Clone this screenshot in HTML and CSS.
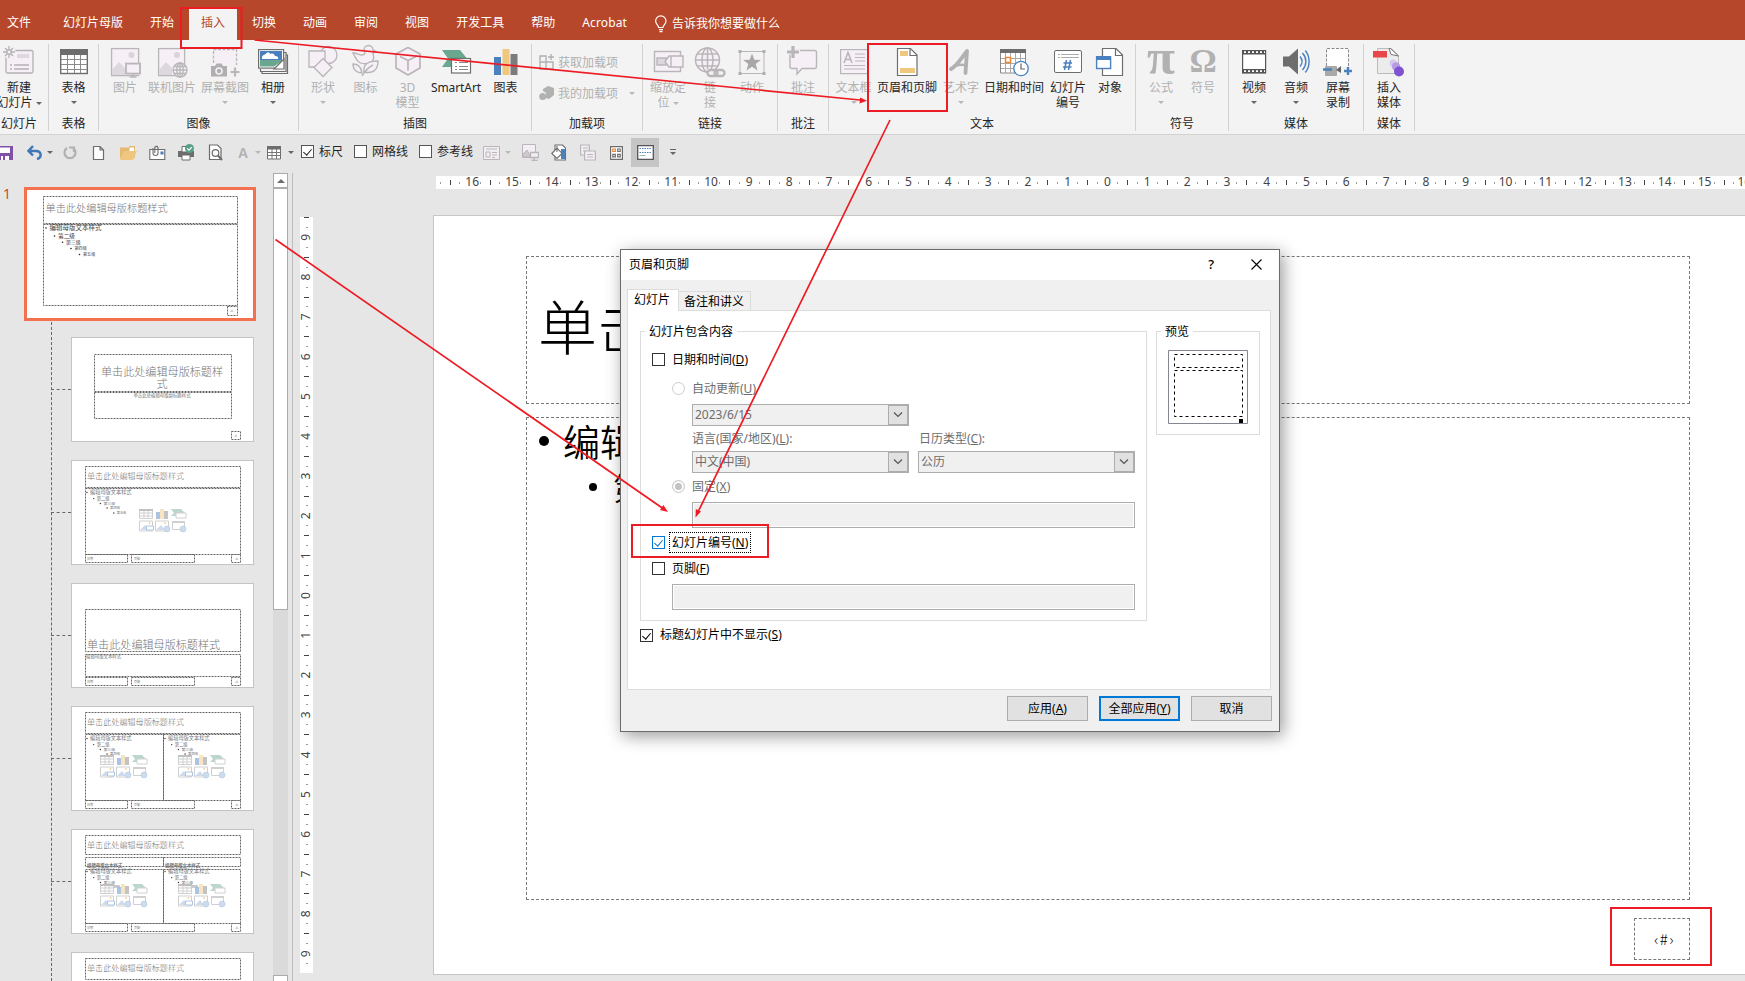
FILE: index.html
```html
<!DOCTYPE html>
<html lang="zh-CN">
<head>
<meta charset="utf-8">
<title>幻灯片母版</title>
<link rel="stylesheet" href="styles.css">
</head>
<body>
<div class="app">
  <nav class="tabs">
    <span class="tab tab-file">文件</span>
    <span class="tab">幻灯片母版</span>
    <span class="tab">开始</span>
    <span class="tab active">插入</span>
    <span class="tab">切换</span>
    <span class="tab">动画</span>
    <span class="tab">审阅</span>
    <span class="tab">视图</span>
    <span class="tab">开发工具</span>
    <span class="tab">帮助</span>
    <span class="tab acro">Acrobat</span>
    <span class="tell"><svg width="14" height="18" viewBox="0 0 14 18" fill="none" stroke="#fff" stroke-width="1.2"><path d="M4.6 12.5c0-2.2-3-3.2-3-6.400a5.200 5.200 0 0 1 10.400 0c0 3.200-3 4.200-3 6.400zM5 14.600h4M5.500 16.700h3"/></svg>告诉我你想要做什么</span>
  </nav>

  <section class="ribbon">
    <div class="group g-slide">
      <div class="items">
        <div class="btn"><svg viewBox="0 0 32 32" fill="none" stroke="#b5b0b5" stroke-width="1.300"><rect x="3" y="5.500" width="27" height="22.500" rx="1.500" fill="#f6f0f6"/><rect x="14" y="9" width="12" height="4" fill="#ddd8dd" stroke="none"/><path d="M7 20h2M11 20h15M7 24h2M11 24h15"/><circle cx="6" cy="7" r="6.500" fill="#f3f3f3" stroke="none"/><path d="M6 1v12M0 7h12M2 3l8 8M10 3l-8 8" stroke-width="1.300"/><circle cx="6" cy="7" r="2.200" fill="#f3f3f3"/></svg><span>新建</span><span>幻灯片 <i class="caret"></i></span></div>
      </div>
      <div class="glabel">幻灯片</div>
    </div>
    <div class="group g-table">
      <div class="items">
        <div class="btn"><svg viewBox="0 0 32 32"><rect x="2.700" y="5" width="26.600" height="23.500" fill="#fff" stroke="#6d6d6d" stroke-width="1.400"/><path d="M2 4h28v6H2z" fill="#6d6d6d"/><path d="M3 14.500h26M3 19.500h26M3 24.500h26M9.500 10v18M16.500 10v18M22.500 10v18" stroke="#8a8a8a" fill="none"/></svg><span>表格</span><i class="caret"></i></div>
      </div>
      <div class="glabel">表格</div>
    </div>
    <div class="group g-image">
      <div class="items">
        <div class="btn off"><svg viewBox="0 0 32 32" fill="none" stroke="#b9b5b9" stroke-width="1.300"><rect x="2.600" y="3.600" width="27" height="27" fill="#f6f0f6"/><circle cx="22.500" cy="10" r="3" fill="#d9d4d9" stroke="none"/><path d="M3 30V25l7-8 6 6v7z" fill="#ddd8dd" stroke="none"/><rect x="16" y="18" width="16" height="12" fill="#f3f3f3" stroke="none"/><rect x="17" y="18.600" width="14" height="10" fill="#f6f0f6" stroke-width="1.800"/><path d="M24 29v3M20.500 32h7"/></svg><span>图片</span></div>
        <div class="btn off"><svg viewBox="0 0 32 32" fill="none" stroke="#b9b5b9" stroke-width="1.300"><rect x="2.600" y="3.600" width="26" height="27" fill="#f6f0f6"/><circle cx="21" cy="10" r="3" fill="#d9d4d9" stroke="none"/><path d="M3 30V25l7-8 6 6v7z" fill="#ddd8dd" stroke="none"/><circle cx="24" cy="25" r="7" fill="#f3f3f3"/><ellipse cx="24" cy="25" rx="3.200" ry="7"/><path d="M17 25h14M24 18v14M18 21.500h12M18 28.500h12"/></svg><span>联机图片</span></div>
        <div class="btn off"><svg viewBox="0 0 32 32" fill="none" stroke="#b9b5b9" stroke-width="1.300"><path d="M4.500 18V4.500h23V20" stroke-dasharray="3 1.500" fill="#f6f0f6"/><path d="M2 21h4l1.500-2.500h5L14 21h4v10.500H2z" fill="#b1adb1" stroke="none"/><circle cx="10" cy="26" r="3" stroke="#f3f3f3" stroke-width="1.600"/><path d="M26 22.500v9M21.500 27h9" stroke-width="2.200"/></svg><span>屏幕截图</span><i class="caret"></i></div>
        <div class="btn"><svg viewBox="0 0 32 32" fill="none" stroke="#6d6d6d" stroke-width="1.200"><path d="M5 26v2.500h25.500V10H28"/><path d="M3.500 24v2.500H29V7.500h-2" fill="#f3f3f3"/><rect x="1.600" y="4.600" width="25" height="18.500" fill="#fff"/><path d="M3 6h22v9H3z" fill="#4a80bd" stroke="none"/><path d="M5 12c1-3 4-2 4.500-4 2-1 3 0 4 1 2-1 4 0 4.500 2 2 0 4 1 3 3H5z" fill="#fff" stroke="none"/><path d="M3 15h22v1l-8 5.500H3z" fill="#69a78f" stroke="none"/><path d="M17 24l10-10v10z" fill="#fff"/></svg><span>相册</span><i class="caret"></i></div>
      </div>
      <div class="glabel">图像</div>
    </div>
    <div class="group g-illus">
      <div class="items">
        <div class="btn off"><svg viewBox="0 0 32 32" fill="#f6f0f6" stroke="#b9b5b9" stroke-width="1.300"><circle cx="21.500" cy="10" r="8.500"/><path d="M2 6h16v16H2z"/><path d="M16 13.500l9 9-9 9-9-9z"/></svg><span>形状</span><i class="caret"></i></div>
        <div class="btn off"><svg viewBox="0 0 32 32" fill="#f6f0f6" stroke="#b9b5b9" stroke-width="1.400"><path d="M14 5a4.500 4.500 0 0 1 9 0l3 1.500-3 1.500c0 3 2 4 0 7-3 5-13 5-16 0-2-3-3-5-4-7 4 0 6 2 9 2 3 0 4-3 2-5z"/><path d="M28 16c-10 0-15 3-14 11 9 2 14-2 14-11zM3 19c5 0 8 2 9 9-5 0-9-3-9-9z"/><path d="M12 31c3-5 7-9 11-11" fill="none"/></svg><span>图标</span></div>
        <div class="btn off"><svg viewBox="0 0 32 32" fill="#f6f0f6" stroke="#b9b5b9" stroke-width="1.700" stroke-linejoin="round"><path d="M16 2.500l12 6.500v14L16 30 4 23V9z"/><path d="M8 11.500l8 4 8-4M16 15.500v10" fill="none"/></svg><span>3D</span><span>模型</span></div>
        <div class="btn"><svg viewBox="0 0 32 32"><path d="M2 5h18l7 8.500-7 8.500H2l6-8.500z" fill="#69a78f"/><rect x="11.500" y="13.500" width="19" height="14.500" fill="#fff" stroke="#6d6d6d" stroke-width="1.200"/><path d="M15 17.500h2M19 17.500h9M15 21.500h2M19 21.500h9M15 24.500h2M19 24.500h9" stroke="#8a8a8a"/></svg><span class="latin">SmartArt</span></div>
        <div class="btn"><svg viewBox="0 0 32 32"><path d="M4 12h7v18H4z" fill="#4a80bd"/><path d="M12.500 4h7v26h-7z" fill="#efc77e"/><path d="M20.500 9h7v21h-7z" fill="#7c7c7c"/></svg><span>图表</span></div>
      </div>
      <div class="glabel">插图</div>
    </div>
    <div class="group g-addin">
      <div class="items col">
        <div class="line off"><svg width="17" height="17" viewBox="0 0 17 17" fill="none" stroke="#b1b1b1" stroke-width="1.400"><path d="M1 2h6v6H1zM1 8h6v7H1zM7 8h7v7H7zM12 0v6M9 3h6"/></svg>获取加载项</div>
        <div class="line off"><svg width="17" height="17" viewBox="0 0 17 17" fill="#b1b1b1"><path d="M9 1l6 2v7l-5 4-3-1V8L4 6V4z"/><circle cx="3.700" cy="11.500" r="3.500"/></svg>我的加载项<i class="caret far"></i></div>
      </div>
      <div class="glabel">加载项</div>
    </div>
    <div class="group g-link">
      <div class="items">
        <div class="btn off"><svg viewBox="0 0 32 32" fill="#f6f0f6" stroke="#b9b5b9" stroke-width="1.400"><rect x="2.500" y="6.500" width="26" height="20"/><path d="M5 13h9v7H5z" fill="#ddd8dd"/><path d="M13 16.500l4-5.500h14v11H17z"/><path d="M19 11v11"/></svg><span>缩放定</span><span>位 <i class="caret"></i></span></div>
        <div class="btn off"><svg viewBox="0 0 32 32" fill="none" stroke="#b9b5b9" stroke-width="1.500"><circle cx="13.500" cy="15" r="12" fill="#f6f0f6"/><ellipse cx="13.500" cy="15" rx="5.500" ry="12"/><path d="M1.500 15h24M13.500 3v24M3 9h21M3 21h21"/><path d="M13 24h19v8H13z" fill="#f3f3f3" stroke="none"/><rect x="13.500" y="25" width="10" height="6" rx="3" stroke-width="2.300"/><rect x="20.500" y="25" width="10" height="6" rx="3" stroke-width="2.300"/></svg><span>链</span><span>接</span></div>
        <div class="btn off"><svg viewBox="0 0 32 32" fill="none" stroke="#b9b5b9"><path d="M4 6.500h24v22H4z"/><path d="M2.500 5h3v3h-3zM26.500 5h3v3h-3zM2.500 27h3v3h-3zM26.500 27h3v3h-3z" fill="#b1adb1" stroke="none"/><path d="M16 8.500l2.300 6.200 6.500.3-5.100 4.100 1.800 6.400-5.500-3.700-5.500 3.700 1.800-6.400-5.100-4.100 6.500-.3z" fill="#aaa6aa" stroke="none"/></svg><span>动作</span></div>
      </div>
      <div class="glabel">链接</div>
    </div>
    <div class="group g-note">
      <div class="items">
        <div class="btn off"><svg viewBox="0 0 32 32" fill="#f6f0f6" stroke="#b9b5b9" stroke-width="1.400"><path d="M6 5.500h21.500a2 2 0 0 1 2 2v14a2 2 0 0 1-2 2H15l-5 5.500v-5.500H5a2 2 0 0 1-2-2V8z"/><path d="M6.500 0v14M0 7h13" stroke="#f3f3f3" stroke-width="5"/><path d="M6 1v12M0 7h12" stroke-width="3.200"/></svg><span>批注</span></div>
      </div>
      <div class="glabel">批注</div>
    </div>
    <div class="group g-text">
      <div class="items">
        <div class="btn off"><svg viewBox="0 0 32 32" fill="#f6f0f6" stroke="#b9b5b9" stroke-width="1.200"><rect x="2.600" y="4.600" width="27" height="24"/><path d="M17 9h10M17 12.500h10M17 16h10M6 20.500h21M6 24h21"/><path d="M6 18l4-10.500L14 18M7.500 14.500h5" fill="none" stroke-width="1.600"/></svg><span>文本框</span><i class="caret"></i></div>
        <div class="btn"><svg viewBox="0 0 32 32"><path d="M6.500 3.500h13l6.500 6.500v20.500H6.500z" fill="#fff" stroke="#6d6d6d" stroke-width="1.200"/><path d="M19 3.500v7h7" fill="none" stroke="#6d6d6d" stroke-width="1.200"/><path d="M9 6h8v5H9zM9 23h15v5H9z" fill="#efc77e"/></svg><span>页眉和页脚</span></div>
        <div class="btn off"><svg viewBox="0 0 32 32" fill="none" stroke="#b1b1b1" stroke-linejoin="round" stroke-linecap="round"><path d="M6 24C13 20 17 12 22 6l-1.500 22" stroke-width="3.800"/><path d="M11 20.500c4-1 7-1 10 0" stroke-width="2.600"/></svg><span>艺术字</span><i class="caret"></i></div>
        <div class="btn"><svg viewBox="0 0 32 32" fill="none" stroke="#8a8a8a"><path d="M2.500 5h25v23h-25z" fill="#fff"/><path d="M2 4h26v4H2z" fill="#6d6d6d" stroke="none"/><path d="M3 13.500h24M3 18.500h24M3 23.500h24M7.500 8v20M12.500 8v20M17.500 8v20M22.500 8v20" stroke="#aaa"/><rect x="7.500" y="12.500" width="5" height="5" stroke="#e8862e" stroke-width="1.500" fill="#fff"/><circle cx="23" cy="23.500" r="7.200" fill="#fff" stroke="#4a80bd" stroke-width="1.300"/><path d="M23 18.500v5.500h4" stroke="#666" stroke-width="1.200"/></svg><span>日期和时间</span></div>
        <div class="btn"><svg viewBox="0 0 32 32"><rect x="2.500" y="5.500" width="27" height="22" rx="1.500" fill="#fff" stroke="#6d6d6d"/><path d="M6 9.500h2M9 9.500h18M6 12.500h2M9 12.500h18" stroke="#aaa"/><path d="M14.500 15l-2 10M18.500 15l-2 10M11.500 18h8.500M11 22h8.500" stroke="#4a80bd" stroke-width="1.500"/></svg><span>幻灯片</span><span>编号</span></div>
        <div class="btn"><svg viewBox="0 0 32 32"><path d="M8.500 3.500h13.500l6.500 6.500v20.500h-20z" fill="#fff" stroke="#6d6d6d" stroke-width="1.200"/><path d="M21.500 3.500v7h7" fill="none" stroke="#6d6d6d" stroke-width="1.200"/><rect x="2.600" y="12" width="14" height="11.500" fill="#fff" stroke="#4a80bd" stroke-width="1.400"/><path d="M2 11h15v4H2z" fill="#4a80bd"/></svg><span>对象</span></div>
      </div>
      <div class="glabel">文本</div>
    </div>
    <div class="group g-symbol">
      <div class="items">
        <div class="btn off"><b class="glyph">π</b><span>公式</span><i class="caret"></i></div>
        <div class="btn off"><b class="glyph omega">Ω</b><span>符号</span></div>
      </div>
      <div class="glabel">符号</div>
    </div>
    <div class="group g-media">
      <div class="items">
        <div class="btn"><svg viewBox="0 0 32 32"><rect x="4.600" y="5.600" width="23" height="22" fill="#fff" stroke="#555" stroke-width="1.200"/><path d="M4 5h24v4.500H4zM4 24h24v4.500H4z" fill="#555"/><path d="M6 7.200h21M6 26.200h21" stroke="#fff" stroke-width="1.800" stroke-dasharray="2 2"/></svg><span>视频</span><i class="caret"></i></div>
        <div class="btn"><svg viewBox="0 0 32 32"><path d="M3 11.500h6l9-8v26l-9-8H3z" fill="#6d6d6d"/><path d="M20 11.500c2.500 3 2.500 7 0 10M22.500 8c4.500 5 4.500 12 0 17M25.300 5.500c5 6 5 16 0 22" fill="none" stroke="#4a80bd" stroke-width="1.400"/></svg><span>音频</span><i class="caret"></i></div>
        <div class="btn"><svg viewBox="0 0 32 32"><path d="M4.500 21V3.500h22V22" fill="#fff" stroke="#8a8a8a" stroke-dasharray="3 1.500"/><rect x="3" y="21" width="12" height="10" rx="1" fill="#a8a8a8"/><path d="M14 25l5-4v7z" fill="#666"/><path d="M1 24.500h9M22 26h8M26 22v8" stroke="#4a80bd" stroke-width="2.400"/></svg><span>屏幕</span><span>录制</span></div>
      </div>
      <div class="glabel">媒体</div>
    </div>
    <div class="group g-flash">
      <div class="items">
        <div class="btn"><svg viewBox="0 0 32 32"><path d="M4.500 3.500h14l7 7v18h-21z" fill="#ececec" stroke="#bbb"/><path d="M16 3.500l2 6 7.500 1.500-8-7.500z" fill="#fff" stroke="#777"/><path d="M0 6h14v6.500H0z" fill="#e8474a"/><circle cx="20" cy="18" r="3.500" fill="#d6c8ee"/><circle cx="23" cy="21.500" r="4.200" fill="#b79be4"/><circle cx="26" cy="26.500" r="5" fill="#8052cf"/></svg><span>插入</span><span>媒体</span></div>
      </div>
      <div class="glabel">媒体</div>
    </div>
  </section>

  <section class="quick">
    <svg class="q-save" width="13" height="16" viewBox="0 0 13 16"><path d="M-3 1h16v14H-3z" fill="#8151a8"/><path d="M0 2.500h10V8H0zM1 11h8v4H1z" fill="#fff"/><path d="M3 11h2v4H3z" fill="#8151a8"/></svg>
    <svg class="ml14" width="15" height="16" viewBox="0 0 15 16" fill="none" stroke="#3d77b5" stroke-width="2.400"><path d="M2 6h7c6 0 6 7 1 8M6 1L1.500 6 6 10.500"/></svg>
    <i class="caret ml5"></i>
    <svg class="ml10" width="14" height="16" viewBox="0 0 14 16" fill="none" stroke="#b1b1b1" stroke-width="2.200"><path d="M4 3a5.500 5.500 0 1 0 6 0M6 2.500h5V7"/></svg>
    <svg class="ml15" width="13" height="16" viewBox="0 0 13 16" fill="#fff" stroke="#6d6d6d" stroke-width="1.200"><path d="M1.500 1.500h6.500l3.500 3.500v9.500h-10zM8 1.500V5h3.500"/></svg>
    <svg class="ml15" width="17" height="16" viewBox="0 0 17 16"><path d="M0 2.500h9V1h6v12H0z" fill="#e5b971"/><path d="M9.500 2.500h4.500V7H9.500z" fill="#fff"/><path d="M3.500 6H17l-4 9H0z" fill="#efc77e"/></svg>
    <svg class="ml12" width="17" height="16" viewBox="0 0 17 16" fill="#fff" stroke="#6d6d6d" stroke-width="1.100"><path d="M.8 4.500h15v10H.8z"/><path d="M12 7h2v2h-2z" fill="#4a80bd" stroke="#4a80bd"/><path d="M4 3v5a2.500 2.500 0 0 0 5 0V2.500a1.700 1.700 0 0 0-3.200 0V8" fill="none"/></svg>
    <svg class="ml12" width="17" height="17" viewBox="0 0 17 17"><path d="M0 7h16v6H0z" fill="#6d6d6d"/><path d="M4 2.500h8V8H4zM4 11h8v5H4z" fill="#fff" stroke="#6d6d6d"/><circle cx="11.500" cy="4.500" r="4.500" fill="#58a088"/><path d="M9.300 4.500l1.700 1.700 2.800-3" fill="none" stroke="#fff" stroke-width="1.200"/></svg>
    <svg class="ml13" width="15" height="17" viewBox="0 0 15 17" fill="#fff" stroke="#6d6d6d" stroke-width="1.200"><path d="M1.500 1h8l3.500 3.500V15.500H1.500z"/><circle cx="7.500" cy="9" r="3.300"/><path d="M10 11.500l4 4.500" stroke-width="2"/></svg>
    <span class="q-a">A</span>
    <i class="caret pale ml7"></i>
    <svg class="ml6" width="14" height="14" viewBox="0 0 14 14"><path d="M.5 1h13v12H.5z" fill="#fff" stroke="#6d6d6d"/><path d="M0 0h14v3.500H0z" fill="#6d6d6d"/><path d="M1 6.500h12M1 9.500h12M5 3v10M9.500 3v10" stroke="#777"/></svg>
    <i class="caret ml7"></i>
    <span class="box on ml7"></span><span class="q-label">标尺</span>
    <span class="box ml11"></span><span class="q-label">网格线</span>
    <span class="box ml11"></span><span class="q-label">参考线</span>
    <svg class="ml10" width="17" height="16" viewBox="0 0 17 16" fill="#f3eef3" stroke="#b9b5b9"><path d="M.5 1.500h16v13H.5zM3 4h11M3 7h4v5H3zM9 7.500h5M9 10h5M9 12.500h3"/></svg>
    <i class="caret pale ml5"></i>
    <svg class="ml11" width="17" height="17" viewBox="0 0 17 17" fill="#f3eef3" stroke="#b9b5b9"><path d="M.5.5h13v13H.5z"/><path d="M1 13V10l4-4 4 7z" fill="#cfcacf"/><path d="M8.500 8.500h8v5h-8zM12 14v2.500M9.500 16.500h6" stroke-width="1.300"/></svg>
    <svg class="ml12" width="16" height="17" viewBox="0 0 16 17" fill="#fff" stroke="#6d6d6d" stroke-width="1.100"><path d="M4 1h7.500l3 3v12H4z"/><path d="M10 5h4.500v10H10z" fill="#4a80bd" stroke="none"/><path d="M.8 9.500L6 4l5 5.500L6 14.500zM6 8V2"/></svg>
    <svg class="ml13" width="16" height="17" viewBox="0 0 16 17" fill="#f3eef3" stroke="#b9b5b9" stroke-width="1.200"><path d="M.6 1h8.800v10H.6zM3 4h5M3 7h5"/><path d="M4.600 7h10.800v9H4.600zM7 10.500h6M7 13h6"/></svg>
    <svg class="ml14" width="13" height="14" viewBox="0 0 13 14" fill="#fff" stroke="#6d6d6d" stroke-width="1.200"><path d="M.6.600h11.800v12.800H.6z"/><path d="M2.800 3h2.500v2.500H2.800z" stroke="#e8862e"/><path d="M7.700 3h2.500v2.500H7.700zM2.800 8.300h2.500v2.500H2.800zM7.700 8.300h2.500v2.500H7.700z"/></svg>
    <span class="pressed"><svg width="17" height="15" viewBox="0 0 17 15"><path d="M.7.7h15.600v13.600H.7z" fill="#fff" stroke="#555" stroke-width="1.300"/><path d="M2.500 3.500h12M2.500 7.500h12" stroke="#4a80bd" stroke-dasharray="1.500 1"/><path d="M2.500 10.500h6" stroke="#8fc0b0"/></svg></span>
    <svg class="ml11" width="6" height="7" viewBox="0 0 6 7"><path d="M0 .5h6" stroke="#666"/><path d="M0 3h6L3 6z" fill="#666"/></svg>
  </section>

  <main class="work">
    <aside class="nav">
      <div class="thumbs" id="thumbs"></div>
      <div class="scroll">
        <div class="arrow"><i></i></div>
        <div class="grip"></div>
        <div class="trough"></div>
        <div class="arrow down"></div>
      </div>
    </aside>
    <svg class="vruler" id="vruler" width="13" height="756"></svg>
    <div class="editor">
      <svg class="hruler" id="hruler" width="1309" height="13"></svg>
      <div class="slide">
        <div class="ph ph-title">单击此处编辑母版标题样式</div>
        <div class="ph ph-body">
          <p class="l1"><i></i>编辑母版文本样式</p>
          <p class="l2"><i></i>第二级</p>
        </div>
        <div class="ph ph-num">‹#›</div>
      </div>
    </div>
  </main>

  <div class="dialog">
    <div class="d-title"><span>页眉和页脚</span><b>?</b><svg width="11" height="11" viewBox="0 0 11 11" stroke="#000" stroke-width="1.100"><path d="M.5.500l10 10M10.500.500l-10 10"/></svg></div>
    <div class="d-tabs"><span class="d-tab sel">幻灯片</span><span class="d-tab">备注和讲义</span></div>
    <div class="d-panel">
      <div class="d-cols">
        <div class="fs fs-main">
          <span class="legend">幻灯片包含内容</span>
          <div class="row r-date"><span class="box dk"></span>日期和时间(<u>D</u>)</div>
          <div class="row r-auto dim"><span class="radio"></span>自动更新(<u>U</u>)</div>
          <div class="combos"><div class="combo">2023/6/15<span><svg width="10" height="6" viewBox="0 0 10 6"><path d="M1 .5l4 4 4-4"/></svg></span></div></div>
          <div class="row r-lang dim"><span>语言(国家/地区)(<u>L</u>):</span><span>日历类型(<u>C</u>):</span></div>
          <div class="combos"><div class="combo">中文(中国)<span><svg width="10" height="6" viewBox="0 0 10 6"><path d="M1 .5l4 4 4-4"/></svg></span></div><div class="combo">公历<span><svg width="10" height="6" viewBox="0 0 10 6"><path d="M1 .5l4 4 4-4"/></svg></span></div></div>
          <div class="row r-fix dim"><span class="radio dot"></span>固定(<u>X</u>)</div>
          <div class="field f1"></div>
          <div class="row r-num"><span class="box blue on"></span><span class="focus">幻灯片编号(<u>N</u>)</span></div>
          <div class="row r-foot"><span class="box dk"></span>页脚(<u>F</u>)</div>
          <div class="field f2"></div>
        </div>
        <div class="fs fs-prev">
          <span class="legend">预览</span>
          <svg width="80" height="74" viewBox="0 0 80 74" fill="none"><path d="M.5.500h79v73H.5z" fill="#fff" stroke="#828790"/><path d="M6.500 4.500h68v13h-68zM6.500 20.500h68v46h-68z" stroke="#000" stroke-dasharray="3 3"/><path d="M71 69h4v4h-4z" fill="#000"/></svg>
        </div>
      </div>
      <div class="row r-hide"><span class="box dk on"></span>标题幻灯片中不显示(<u>S</u>)</div>
    </div>
    <div class="d-foot"><span class="push">应用(<u>A</u>)</span><span class="push main">全部应用(<u>Y</u>)</span><span class="push">取消</span></div>
  </div>

  <svg class="marks" width="1745" height="981" viewBox="0 0 1745 981" fill="none" stroke="#ed1c24" stroke-width="2">
    <path d="M181 8h60.500v40H181zM868 44h79v67h-79zM632 525h136v32H632zM1611 908h100v57h-100z"/>
    <path d="M254.500 40L860 100M890 120L698.500 511M275.500 239.500L663 508.500" stroke-width="1.700"/>
    <path d="M867 100.700l-7.500 2.700.6-6zM695.500 517.500l.300-8.500 5.200 2.600zM668 512l-8-2 3.400-5z" fill="#ed1c24" stroke="none"/>
  </svg>
</div>
<script src="app.js"></script>
</body>
</html>
```
FILE: styles.css
```css
* { box-sizing: border-box; }
body {
  margin: 0;
  font: 12px/14px "Noto Sans", "Noto Sans CJK SC", sans-serif;
  color: #262626;
  background: #e6e6e6;
}
.app {
  position: relative;
  display: flex;
  flex-direction: column;
  width: 1745px;
  height: 981px;
  overflow: hidden;
  white-space: nowrap;
}

/* tab strip */
.tabs {
  display: flex;
  gap: 3px;
  height: 40px;
  padding-top: 9px;
  background: #b7472a;
  color: #fff;
}
.tab { padding: 7px 12px 0; }
.tab-file { padding: 7px 17px 0 7px; }
.tab.active { background: #f3f3f3; color: #b7472a; }
.tab.acro { letter-spacing: .15px; }
.tell { display: flex; align-items: center; gap: 4px; padding: 0 0 0 12px; margin-top: -2px; }

/* ribbon */
.ribbon {
  display: flex;
  height: 95px;
  padding-top: 4px;
  background: #f3f3f3;
  border-bottom: 1px solid #d2d2d2;
}
.group {
  display: flex;
  flex-direction: column;
  justify-content: space-between;
  height: 87px;
  border-right: 1px solid #d2d2d2;
}
.items { display: grid; }
.glabel { text-align: center; height: 14px; }
.g-slide { width: 49px; }
.g-slide .items { grid-template-columns: 38px; }
.g-slide .glabel { padding-right: 10px; }
.g-table { width: 50px; }
.g-image { width: 200px; }
.g-image .items { grid-template-columns: 36px 58px 48px 48px; padding-left: 8px; }
.g-illus { width: 233px; }
.g-illus .items { grid-template-columns: 42px 43px 41px 56px 43px; padding-left: 3px; }
.g-addin { width: 111px; }
.g-link { width: 135px; }
.g-link .items { grid-template-columns: 42px 42px 42px; padding-left: 4px; }
.g-note { width: 51px; }
.g-text { width: 307px; }
.g-text .items { grid-template-columns: 35px 72px 36px 70px 38px 46px; padding-left: 7px; }
.g-symbol { width: 93px; }
.g-symbol .items { grid-template-columns: 42px 42px; padding-left: 4px; }
.g-media { width: 135px; }
.g-media .items { grid-template-columns: 42px 42px 42px; padding-left: 4px; }
.g-flash { width: 51px; }
.btn { display: flex; flex-direction: column; align-items: center; padding-top: 1px; line-height: 15px; }
.btn svg { width: 32px; height: 32px; margin-bottom: 3px; overflow: visible; flex: none; }
.btn > .caret { margin-top: 6px; }
.off { color: #b1b1b1; }
.latin { letter-spacing: -0.1px; }
.caret {
  display: inline-block;
  vertical-align: middle;
  border: 3px solid transparent;
  border-top-color: #666;
  border-bottom: 0;
  flex: none;
}
.off .caret, .caret.pale { border-top-color: #b9b9b9; }
.caret.far { margin-left: 9px; }
.items.col { padding: 9px 0 0 7px; row-gap: 12px; }
.line { display: flex; align-items: center; gap: 2px; height: 19px; }
.glyph { font: bold 51px/20px "Liberation Serif", serif; height: 35px; padding-top: 2px; }
.glyph.omega { font-size: 34px; line-height: 28px; }

/* quick access bar */
.quick { display: flex; align-items: center; height: 35px; }
.quick svg { flex: none; }
.ml5 { margin-left: 5px; }
.ml6 { margin-left: 6px; }
.ml7 { margin-left: 7px; }
.ml10 { margin-left: 10px; }
.ml11 { margin-left: 11px; }
.ml12 { margin-left: 12px; }
.ml13 { margin-left: 13px; }
.ml14 { margin-left: 14px; }
.ml15 { margin-left: 15px; }
.q-a { margin-left: 15px; width: 10px; font: bold 14px "Liberation Sans", sans-serif; color: #b1b1b1; }
.q-label { margin-left: 5px; padding-bottom: 2px; }
.box { position: relative; flex: none; width: 13px; height: 13px; border: 1px solid #555; background: #fff; }
.box.dk { border-color: #333; }
.box.blue { border-color: #0078d7; color: #0078d7; }
.box.on::after {
  content: "";
  position: absolute;
  left: 3px;
  top: 1px;
  width: 4px;
  height: 7px;
  border: solid currentColor;
  border-width: 0 1.3px 1.3px 0;
  transform: rotate(40deg);
}
.quick .box { margin-bottom: 2px; }
.pressed { display: grid; place-items: center; width: 28px; height: 29px; margin-left: 8px; background: #c5c5c5; }

/* work area */
.work { display: flex; flex: 1; min-height: 0; }
.nav { display: flex; width: 293px; height: 808px; margin-top: 3px; border-right: 1px solid #bdbdbd; }
.thumbs { display: flex; flex-direction: column; gap: 18px; width: 273px; padding-top: 14px; overflow: hidden; position: relative; }
.thumbs svg { flex: none; display: block; }
.thumbs text { fill: #777; font-family: "Noto Sans CJK SC", sans-serif; }
.thumbs .thin { font-weight: 300; }
.master { display: flex; gap: 14px; height: 134px; margin: 0 0 -2px 3px; }
.master b { width: 7px; font: 14px/14px "Noto Sans", sans-serif; color: #d24726; }
.lay { display: flex; align-items: center; height: 105px; flex: none; padding-left: 51px; }
.lay::before { content: ""; width: 20px; border-top: 1px dashed #666; }
.thumbs::before { content: ""; position: absolute; left: 51px; top: 149px; bottom: 0; border-left: 1px dashed #666; }
.scroll { display: flex; flex-direction: column; width: 15px; background: #dadada; }
.arrow { display: grid; place-items: center; height: 15px; background: #fff; border: 1px solid #ababab; }
.arrow i { border: 4px solid transparent; border-bottom-color: #6d6d6d; border-top: 0; }
.grip { height: 422px; background: #fff; border: 1px solid #ababab; }
.trough { flex: 1; }
.arrow.down { height: 6px; border-bottom: 0; }
.vruler { flex: none; margin: 47px 0 0 7px; background: #fff; }
.editor { flex: 1; min-width: 0; padding-left: 120px; overflow: hidden; }
.hruler { display: block; margin: 6px 0 26px 3px; background: #fff; }
.vruler text, .hruler text { font: 12px "Noto Sans", sans-serif; fill: #444; text-anchor: middle; }

/* slide canvas */
.slide { position: relative; width: 1330px; height: 760px; background: #fff; border: 1px solid #c6c6c6; color: #000; }
.ph { position: absolute; border: 1px dashed #777; }
.ph-title { left: 92px; top: 40px; width: 1164px; height: 148px; padding-left: 11px; font: 300 59px/136px "Noto Sans CJK SC", sans-serif; }
.ph-body { left: 92px; top: 201px; width: 1164px; height: 483px; padding-top: 1px; }
.ph-body p { display: flex; align-items: center; margin: 0; font-family: "Noto Sans CJK SC", sans-serif; font-weight: 350; }
.ph-body i { border-radius: 50%; background: #000; }
.l1 { height: 44px; padding-left: 12px; gap: 14px; font-size: 37px; }
.l1 i { width: 10px; height: 10px; }
.l2 { height: 48px; padding-left: 62px; gap: 16px; font-size: 31px; }
.l2 i { width: 8px; height: 8px; }
.ph-num { left: 1200px; top: 702px; width: 56px; height: 42px; padding-left: 5px; text-align: center; letter-spacing: 1.5px; font: 300 15px/39px "Noto Sans CJK SC", sans-serif; }

/* dialog */
.dialog {
  position: absolute;
  left: 620px;
  top: 249px;
  width: 660px;
  height: 483px;
  border: 1px solid #6b6b6b;
  background: #f0f0f0;
  box-shadow: 3px 4px 16px rgba(0, 0, 0, .4);
  color: #000;
}
.d-title { display: flex; align-items: center; height: 30px; padding: 0 17px 0 8px; background: #fff; }
.d-title span { flex: 1; }
.d-title b { font: 500 13px "Noto Sans", sans-serif; margin: 0 37px 3px 0; }
.d-title svg { margin-bottom: 2px; }
.d-tabs { display: flex; align-items: flex-end; height: 30px; padding-left: 6px; }
.d-tab { height: 19px; padding: 3px 6px 0 5px; border: 1px solid #dcdcdc; border-left: 0; border-bottom: 0; }
.d-tab.sel { position: relative; height: 22px; width: 52px; margin-bottom: -1px; padding: 3px 6px; border-left: 1px solid #dcdcdc; background: #fff; }
.d-panel { height: 380px; margin: 0 8px 0 6px; padding: 20px 10px 0 12px; background: #fff; border: 1px solid #dcdcdc; }
.d-cols { display: flex; gap: 9px; align-items: flex-start; }
.fs { position: relative; border: 1px solid #dcdcdc; }
.fs-main { width: 507px; height: 290px; padding-top: 16px; }
.fs-prev { width: 104px; height: 104px; padding: 18px 0 0 11px; }
.legend { position: absolute; left: 4px; top: -7px; padding: 0 4px; background: #fff; }
.row { display: flex; align-items: center; }
.row .box { margin-right: 7px; }
.dim, .combo { color: #6d6d6d; }
.r-date { height: 23px; margin-bottom: 1px; padding-left: 11px; }
.r-auto { height: 32px; padding-left: 31px; padding-top: 1px; }
.r-lang { display: grid; grid-template-columns: 227px 1fr; height: 25px; padding-left: 51px; }
.r-fix { height: 29px; padding: 0 0 2px 31px; }
.r-num { height: 29px; padding-left: 11px; }
.r-num .box { margin-right: 4px; }
.r-foot { height: 23px; margin-bottom: 4px; padding-left: 11px; }
.r-hide { height: 28px; }
.radio { width: 13px; height: 13px; margin-right: 7px; border: 1px solid #ccc; border-radius: 50%; background: #fff; }
.radio.dot { background: #c4c4c4; box-shadow: inset 0 0 0 2px #fff; }
.combos { display: flex; gap: 9px; padding-left: 51px; }
.combo { display: flex; justify-content: space-between; align-items: center; width: 217px; height: 22px; padding-left: 2px; border: 1px solid #adadad; background: #f0f0f0; }
.combo span { display: grid; place-items: center; width: 20px; height: 20px; border: 1px solid #adadad; background: #e1e1e1; }
.combo path { fill: none; stroke: #555; stroke-width: 1.2; }
.field { height: 26px; border: 1px solid #adadad; background: #f0f0f0; box-shadow: inset 0 0 0 1px #fff; }
.f1 { width: 443px; margin-left: 51px; }
.f2 { width: 463px; margin-left: 31px; }
.focus { padding: 3px 2px 2px; border: 1px dotted #000; }
.d-foot { display: flex; justify-content: flex-end; gap: 11px; padding: 6px 7px 0 0; }
.push { width: 81px; height: 25px; border: 1px solid #adadad; background: #e1e1e1; text-align: center; line-height: 23px; }
.push.main { border: 2px solid #0078d7; line-height: 21px; }

.marks { position: absolute; left: 0; top: 0; pointer-events: none; }
```
FILE: app.js
```js
const STEP = 39.8;

// Rulers: numbers each centimetre, a tick at the half and dots at the quarters.
function ruler(zero, length, vertical, max) {
  let out = '';
  const at = (v, a, b, c) => v < 0 || v > length ? '' : vertical
    ? `<path d="M${a} ${Math.floor(v) + .5}H${b}" stroke="${c}"/>`
    : `<path d="M${Math.floor(v) + .5} ${a}V${b}" stroke="${c}"/>`;
  for (let n = -max; n <= max; n++) {
    const p = zero + n * STEP;
    const wide = Math.abs(n) > 9 ? 1 : 0;
    out += vertical
      ? `<text transform="translate(10 ${p}) rotate(-90)">${Math.abs(n)}</text>`
      : `<text x="${p + (n < 0 ? wide * 1.5 : 0)}" y="10">${Math.abs(n)}</text>`;
    out += at(p + STEP / 4, 6, 8, '#999') + at(p - STEP / 4 - wide, 6, 8, '#999') + at(p + STEP / 2, 4, 9, '#444');
    if (n === -max) out += at(p - STEP / 2, 4, 9, '#444') + at(p - STEP * .75, 6, 8, '#999');
  }
  return out;
}
document.getElementById('hruler').innerHTML = ruler(671.5, 1309, false, 16);
document.getElementById('vruler').innerHTML = ruler(378.5, 756, true, 9);

const box = (x, y, w, h) => `<rect x="${x + .5}" y="${y + .5}" width="${w}" height="${h}" fill="none" stroke="#666" stroke-dasharray="2 1"/>`;
const txt = (x, y, size, s, extra = '') => `<text x="${x}" y="${y + size * .36}" font-size="${size}" ${extra}>${s}</text>`;
const foot = box(14, 94, 42, 8) + box(60, 94, 63, 8) + box(160, 94, 9, 8) + txt(16, 98.5, 3, '日期') + txt(63, 98.5, 3, '页脚') + txt(164, 98.5, 3, '‹#›');
const title = txt(16, 16.5, 8.1, '单击此处编辑母版标题样式', 'class="thin"');

function bullets(x, y, levels) {
  const sizes = [5.2, 4.3, 3.9, 3.3, 3.1];
  const names = ['编辑母版文本样式', '第二级', '第三级', '第四级', '第五级'];
  const dy = [0, 6.1, 11, 15.500, 20.500];
  return names.slice(0, levels).map((s, i) =>
    `<circle cx="${x + i * 6.7 + 2}" cy="${y + dy[i]}" r=".7" fill="#333"/>` + txt(x + 5 + i * 6.7, y + dy[i], sizes[i], s)).join('');
}

function pictures(x, y) {
  return `<g transform="translate(${x} ${y})" fill="#fff" stroke="#ccc" opacity=".9">
    <path d="M.5.500h13v9H.5zM1 4h12M1 7h12M5 1v8M9 1v8"/><path d="M0 0h14v2H0z" fill="#bbb" stroke="none"/>
    <path d="M17 3h4v7h-4z" fill="#a3bfde" stroke="none"/><path d="M21 0h4v10h-4z" fill="#f7e2bd" stroke="none"/><path d="M25 2h4v8h-4z" fill="#bdbdbd" stroke="none"/>
    <path d="M32 0h10l4 4-4 3H32l3-3z" fill="#b4d3c7" stroke="none"/><path d="M37 4h10v5H37z"/>
    <path d="M.5 12h13v10H.5zM16.500 12h13v10h-13zM33.500 12.500h12v8h-12z"/><path d="M33 12h13v2H33z" fill="#ccc" stroke="none"/>
    <path d="M1 21l5-5 4 5zM17 21l5-5 4 5z" fill="#c8d8ea" stroke="none"/><path d="M7.500 17h7v4h-7z" stroke="#a3bfde"/>
    <circle cx="10.500" cy="14" r="1" fill="#f3d294" stroke="none"/><circle cx="26" cy="14" r="1" fill="#f3d294" stroke="none"/>
    <circle cx="28" cy="20" r="3" fill="#c8d8ea" stroke="#a3bfde" stroke-width=".5"/><circle cx="44" cy="20" r="3" fill="#c8d8ea" stroke="#a3bfde" stroke-width=".5"/></g>`;
}

const layouts = [
  box(23, 17, 137, 37) + box(23, 55, 137, 26) + box(160, 94, 9, 8) +
    txt(91, 35, 11.1, '单击此处编辑母版标题样', 'class="thin" text-anchor="middle"') + txt(91, 47, 11.1, '式', 'class="thin" text-anchor="middle"') +
    txt(91, 58.7, 4.4, '单击此处编辑母版副标题样式', 'text-anchor="middle"') + txt(163, 98.5, 3, '‹#›'),
  box(14, 6, 155, 21) + box(14, 28, 155, 66) + title + bullets(14, 32.5, 5) + pictures(68, 49) + foot,
  box(14, 26, 155, 42) + box(14, 71, 155, 22) + txt(16, 62.5, 11.1, '单击此处编辑母版标题样式', 'class="thin"') + txt(15, 73.6, 4.4, '编辑母版文本样式') + foot,
  box(14, 6, 155, 21) + box(14, 28, 78, 66) + box(92, 28, 77, 66) + title + bullets(14, 32.5, 4) + bullets(92, 32.5, 4) + pictures(29, 49) + pictures(107, 49) + foot,
  box(14, 6, 155, 19) + box(14, 28, 78, 9) + box(92, 28, 77, 9) + box(14, 40, 78, 54) + box(92, 40, 77, 54) + title +
    txt(16, 36.5, 4.4, '编辑母版文本样式', 'font-weight="700"') + txt(94, 36.5, 4.4, '编辑母版文本样式', 'font-weight="700"') +
    bullets(14, 42.5, 4) + bullets(92, 42.5, 4) + pictures(29, 55) + pictures(107, 55) + foot,
  box(14, 6, 155, 21) + title
];

const masterText = ['编辑母版文本样式', '第二级', '第三级', '第四级', '第五级'];
const masterPos = [[49.5, 228, 6.5], [58, 236, 5.7], [66, 242.3, 4.9], [74.5, 248.5, 4.1], [83, 254.5, 4.1]];
const master = `<svg width="232" height="134" viewBox="24 187 232 134"><rect x="25.500" y="188.500" width="229" height="131" fill="#fff" stroke="#f4714f" stroke-width="3"/>` +
  box(43, 196, 194, 27) + box(43, 224, 194, 81) + box(227, 306, 10, 9) +
  txt(45.5, 208.8, 10.2, '单击此处编辑母版标题样式', 'class="thin"') +
  masterPos.map(([x, y, size], i) => `<circle cx="${x - 3.5}" cy="${y}" r=".8" fill="#222"/>` + txt(x, y, size, masterText[i], 'style="fill:#444"')).join('') +
  txt(230, 311, 3, '‹#›') + '</svg>';

document.getElementById('thumbs').innerHTML = `<div class="master"><b>1</b>${master}</div>` +
  layouts.map(s => `<div class="lay"><svg width="183" height="105"><rect x=".5" y=".5" width="182" height="104" fill="#fff" stroke="#c4c4c4"/>${s}</svg></div>`).join('');
```
